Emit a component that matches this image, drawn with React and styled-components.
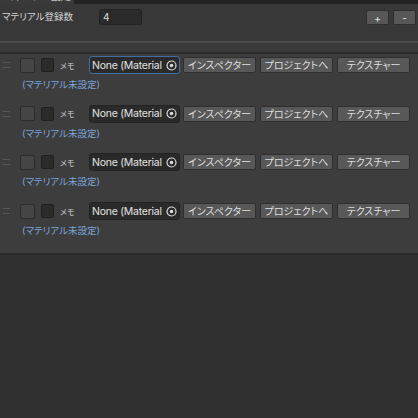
import React from "react";
import styled, { createGlobalStyle } from "styled-components";

const Global = createGlobalStyle`
  html, body { margin: 0; padding: 0; background: #303030; }
  body {
    font-family: Inter, "Noto Sans CJK JP", "Noto Sans", sans-serif;
    color: #d2d2d2;
  }
`;

const Window = styled.div`
  width: 418px;
  height: 418px;
  background: #303030;
  display: flex;
  flex-direction: column;
  overflow: hidden;
`;

const TabStrip = styled.div`
  height: 4px;
  background: #232323;
  display: flex;
  align-items: flex-end;
  overflow: hidden;
`;

const Tab = styled.div`
  width: 74px;
  height: 16px;
  flex: none;
  background: #3a3a3a;
  font-size: 10px;
  line-height: 16px;
  padding-left: 6px;
  box-sizing: border-box;
  color: #cfcfcf;
  white-space: nowrap;
  font-feature-settings: "palt";
`;

const Header = styled.div`
  height: 37px;
  background: #383838;
  display: flex;
  align-items: flex-start;
  padding: 5px 2px 0 2px;
  box-sizing: border-box;
`;

const HeaderLabel = styled.span`
  font-size: 9.5px;
  line-height: 16px;
  width: 97px;
  flex: none;
  font-feature-settings: "palt";
  color: #d4d4d4;
`;

const NumberField = styled.div`
  width: 43px;
  height: 16px;
  box-sizing: border-box;
  background: #2a2a2a;
  border: 1px solid #232323;
  border-radius: 2px;
  font-size: 10px;
  line-height: 14px;
  padding-left: 3px;
  color: #d8d8d8;
`;

const Spacer = styled.div`
  flex: 1;
`;

const StepButton = styled.button`
  width: 23px;
  height: 15px;
  margin-top: 1px;
  margin-left: ${(p) => (p.$first ? "0" : "4px")};
  padding: 0;
  box-sizing: border-box;
  background: #575757;
  border: 1px solid #2e2e2e;
  border-radius: 2px;
  color: #e6e6e6;
  font-family: inherit;
  font-size: 10px;
  line-height: 12px;
`;

const Divider = styled.div`
  height: 2px;
  background: #4b4b4b;
`;

const Gap = styled.div`
  height: 9px;
  background: #393939;
  border-bottom: 2px solid #2b2b2b;
`;

const List = styled.div`
  background: #3d3d3d;
  padding-bottom: 4px;
  border-bottom: 2px solid #2a2a2a;
`;

const Entry = styled.div`
  height: 48.7px;
  display: flex;
  flex-direction: column;
`;

const ControlLine = styled.div`
  margin-top: 2px;
  height: 18px;
  display: flex;
  align-items: center;
  padding-left: 3px;
`;

const Handle = styled.span`
  width: 7px;
  height: 4px;
  border-top: 1px solid #575757;
  border-bottom: 1px solid #575757;
  margin-right: 10px;
  flex: none;
`;

const Swatch = styled.span`
  width: 15px;
  height: 15px;
  box-sizing: border-box;
  background: #454545;
  border: 1px solid #2c2c2c;
  border-radius: 2px;
  margin-right: 6px;
  flex: none;
`;

const Toggle = styled.span`
  width: 13px;
  height: 14px;
  box-sizing: border-box;
  background: #2b2b2b;
  border: 1px solid #202020;
  border-radius: 2px;
  margin-right: 6px;
  flex: none;
`;

const Memo = styled.span`
  font-size: 8px;
  width: 29px;
  flex: none;
  color: #cfcfcf;
  font-feature-settings: "palt";
`;

const ObjectField = styled.div`
  width: 91px;
  height: 18px;
  box-sizing: border-box;
  background: #2a2a2a;
  border: 1px solid ${(p) => (p.$focused ? "#3f6ea6" : "#232323")};
  border-radius: 3px;
  display: flex;
  align-items: center;
  padding-left: 2px;
  margin-right: 3px;
  flex: none;
  overflow: hidden;
`;

const FieldText = styled.span`
  font-size: 10.5px;
  letter-spacing: -0.25px;
  color: #e2e2e2;
  white-space: nowrap;
  flex: 1;
  overflow: hidden;
`;

const ActionButton = styled.button`
  width: 73px;
  height: 16px;
  margin-right: 4px;
  padding: 0;
  box-sizing: border-box;
  background: #585858;
  border: 1px solid #2f2f2f;
  border-radius: 2px;
  color: #dedede;
  font-family: inherit;
  font-size: 10px;
  line-height: 14px;
  font-feature-settings: "palt";
  flex: none;
`;

const Missing = styled.div`
  margin-top: 4px;
  height: 14px;
  line-height: 14px;
  padding-left: 22px;
  font-size: 9.5px;
  color: #7ba4d9;
  font-feature-settings: "palt";
`;

const TargetIcon = () => (
  <svg width="11" height="11" viewBox="0 0 11 11" style={{ flex: "none", marginRight: 2 }}>
    <circle cx="5.5" cy="5.5" r="4.5" fill="none" stroke="#d8d8d8" strokeWidth="1.2" />
    <circle cx="5.5" cy="5.5" r="1.8" fill="#d8d8d8" />
  </svg>
);

const entries = [0, 1, 2, 3];

export default function App() {
  return (
    <Window>
      <Global />
      <TabStrip>
        <Tab>マテリアル設定</Tab>
      </TabStrip>
      <Header>
        <HeaderLabel>マテリアル登録数</HeaderLabel>
        <NumberField>4</NumberField>
        <Spacer />
        <StepButton $first>+</StepButton>
        <StepButton>-</StepButton>
      </Header>
      <Divider />
      <Gap />
      <List>
        {entries.map((i) => (
          <Entry key={i}>
            <ControlLine>
              <Handle />
              <Swatch />
              <Toggle />
              <Memo>メモ</Memo>
              <ObjectField $focused={i === 0}>
                <FieldText>None (Material</FieldText>
                <TargetIcon />
              </ObjectField>
              <ActionButton>インスペクター</ActionButton>
              <ActionButton>プロジェクトへ</ActionButton>
              <ActionButton>テクスチャー</ActionButton>
            </ControlLine>
            <Missing>(マテリアル未設定)</Missing>
          </Entry>
        ))}
      </List>
    </Window>
  );
}
